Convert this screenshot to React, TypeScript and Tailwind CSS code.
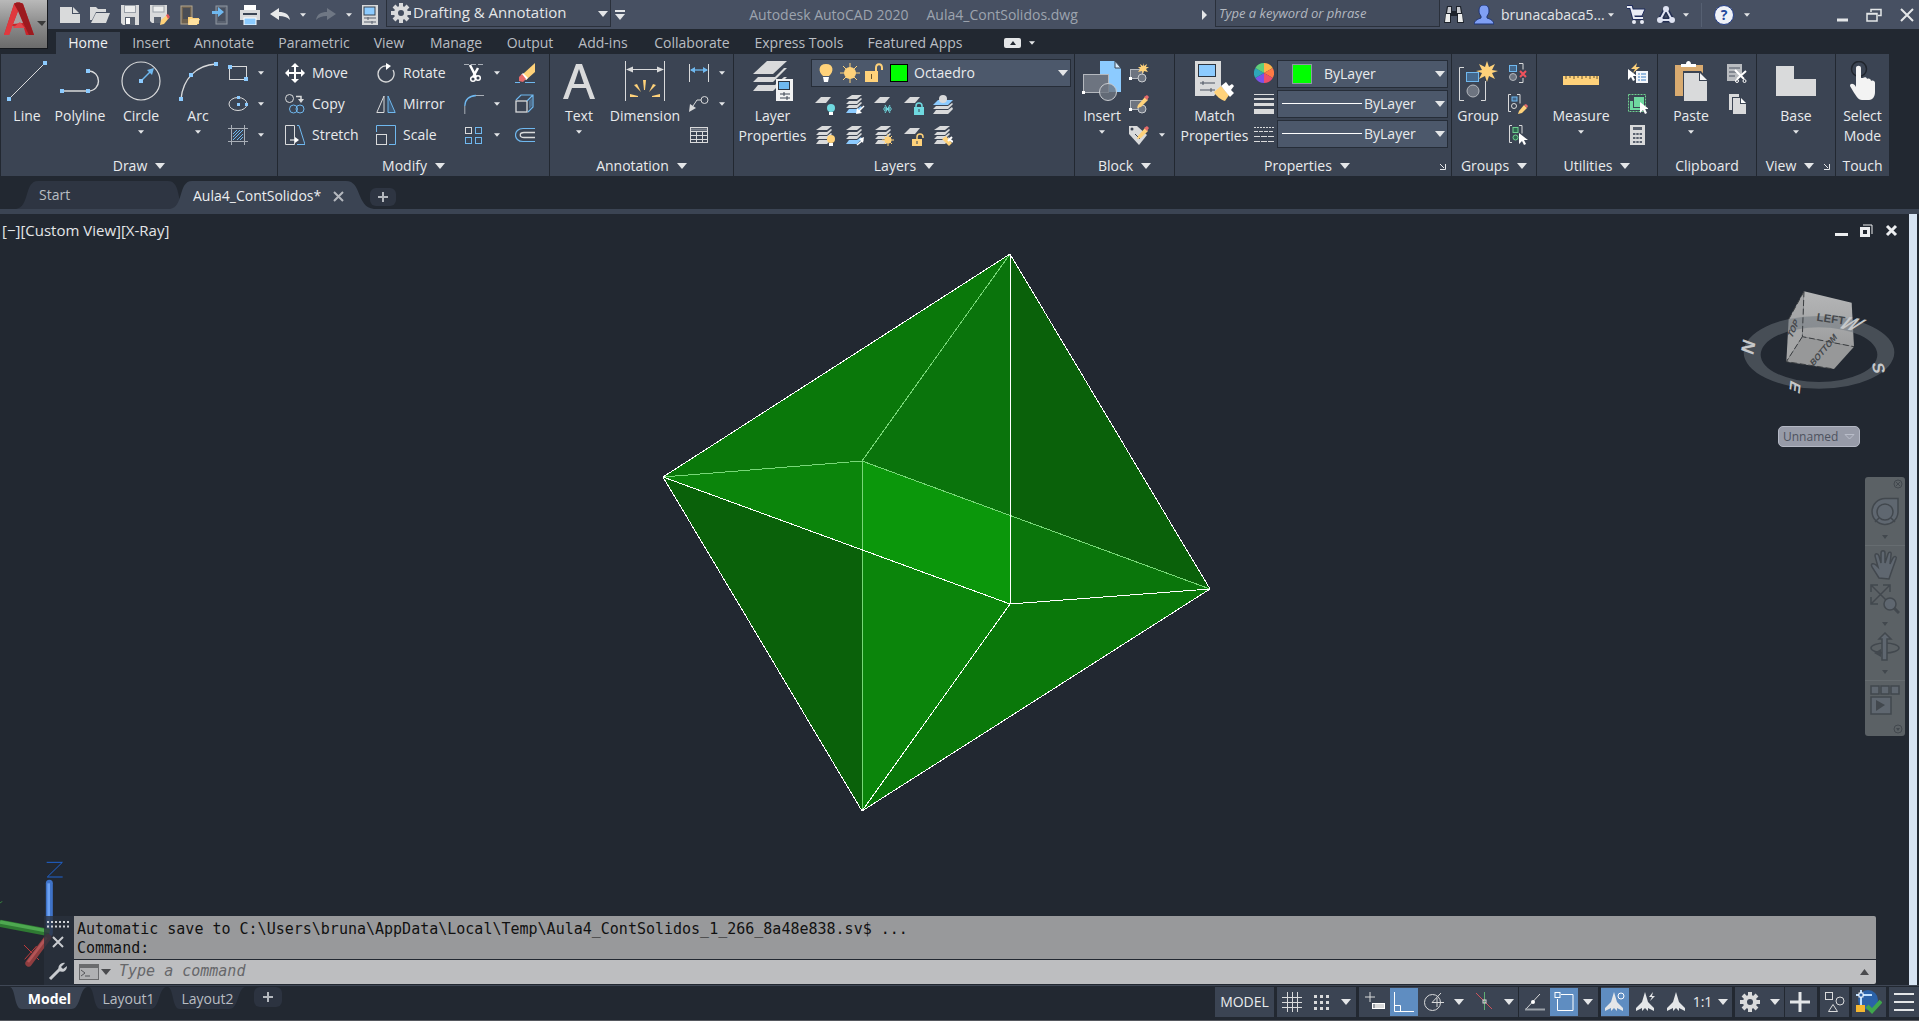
import React, { useState } from 'react';

const LIGHT = '#d9dadb';
const BLUE = '#6fb8ef';
const SKY = '#8ccbff';
const AMBER = '#ffd27a';
const CYAN = '#6fd9e0';

/* ---------- shared bits ---------- */

interface IconProps {
  w?: number;
  h?: number;
  box?: string;
  children: React.ReactNode;
}

function Icon({ w = 20, h = 20, box, children }: IconProps) {
  return (
    <svg width={w} height={h} viewBox={box ?? `0 0 ${w} ${h}`} fill="none" className="shrink-0" aria-hidden="true">
      {children}
    </svg>
  );
}

function Caret({ big = false }: { big?: boolean }) {
  return (
    <svg width={big ? 10 : 6} height={big ? 6 : 4} viewBox="0 0 10 6" className="shrink-0" aria-hidden="true">
      <path d="M0 0h10L5 6z" fill="#e4e6e8" />
    </svg>
  );
}

function Grip({ x, y }: { x: number; y: number }) {
  return <rect x={x - 2} y={y - 2} width="4" height="4" fill={SKY} />;
}

/* ---------- title bar icons ---------- */

const NewIcon = () => (
  <Icon>
    <path d="M0 2h12v7h8v9H0z" fill={LIGHT} />
    <path d="M13 2l6 6h-6z" fill={LIGHT} />
  </Icon>
);

const OpenIcon = () => (
  <Icon>
    <path d="M0 2h6l2 2h8v3H6L2 15H0z" fill={LIGHT} />
    <path d="M6 8h14l-4 10H1z" fill={LIGHT} />
  </Icon>
);

const SaveIcon = () => (
  <Icon>
    <path d="M1 0h18v20H3l-2-2z" fill={LIGHT} />
    <rect x="4" y="0" width="12" height="8" fill="#9aa0a8" />
    <rect x="5" y="1" width="10" height="6" fill="#eceded" />
    <rect x="5" y="12" width="10" height="8" fill="#59616f" />
    <rect x="6" y="13" width="4" height="6" fill="#fff" />
  </Icon>
);

const SaveAsIcon = () => (
  <Icon>
    <path d="M0 0h17v12l-7 6H2l-2-2z" fill={LIGHT} />
    <rect x="3" y="1" width="11" height="6" fill="#eceded" stroke="#9aa0a8" />
    <rect x="4" y="12" width="7" height="6" fill="#59616f" />
    <path d="M11 15l6-5 2 3-5 6-4 1z" fill={AMBER} />
    <path d="M16 10l2-1 2 3-2 2z" fill="#e0575b" />
  </Icon>
);

const OpenMobileIcon = () => (
  <Icon>
    <rect x="1" y="1" width="11" height="18" fill="#6d6150" stroke="#b5a78e" />
    <rect x="3" y="3" width="7" height="11" fill="#4a4d55" />
    <path d="M8 12h4l1 1h6v6H8z" fill={AMBER} />
    <path d="M10 14h10l-3 6H8z" fill="#ffe1a0" />
  </Icon>
);

const SaveMobileIcon = () => (
  <Icon>
    <rect x="6" y="1" width="11" height="18" fill="#5a6270" stroke="#9097a1" />
    <rect x="8" y="3" width="7" height="13" fill="#48505f" />
    <path d="M2 6h6V2l6 5-6 5V9H2z" fill={BLUE} />
  </Icon>
);

const PrintIcon = () => (
  <Icon>
    <rect x="4" y="0" width="12" height="6" fill="#fff" />
    <path d="M0 5h20v10H0z" fill={LIGHT} />
    <rect x="3" y="8" width="14" height="2" fill="#3b4453" />
    <rect x="4" y="13" width="12" height="7" fill={SKY} stroke="#fff" />
  </Icon>
);

const UndoIcon = ({ dim = false }: { dim?: boolean }) => (
  <Icon>
    <g transform={dim ? 'matrix(-1 0 0 1 20 0)' : undefined}>
      <path d="M0 9l9-6v4c6 0 10 2 11 8-3-3-6-4-11-4v4z" fill={dim ? '#6f7784' : '#e8e9ea'} />
    </g>
  </Icon>
);

const SheetIcon = () => (
  <Icon w={16}>
    <rect x="0" y="0" width="16" height="20" fill={LIGHT} />
    <rect x="2" y="2" width="11" height="8" fill={SKY} stroke="#3b4453" />
    <path d="M2 13h12M2 17h12" stroke="#59616f" />
    <path d="M6 12v3M10 16v3" stroke="#59616f" />
  </Icon>
);

const GearIcon = () => (
  <Icon>
    <circle cx="10" cy="10" r="5" stroke={LIGHT} strokeWidth="4" />
    <path d="M10 0v4M10 16v4M0 10h4M16 10h4M3 3l3 3M14 14l3 3M17 3l-3 3M6 14l-3 3" stroke={LIGHT} strokeWidth="4" />
  </Icon>
);

const BinocularsIcon = () => (
  <Icon>
    <path d="M3 1h5v5h4V1h5l3 17h-7v-7H7v7H0z" fill="#1d222b" />
    <path d="M4 2h3v6H3zM13 2h3l1 6h-4z" fill="#c9cbd0" />
    <path d="M2 9h4v8H1zM14 9h4l1 8h-5z" fill="#eceded" />
  </Icon>
);

const UserIcon = () => (
  <Icon>
    <path d="M10 0c4 0 5 3 5 6 0 2-1 4-2 5v2c3 1 6 2 7 6H0c1-4 4-5 7-6v-2c-1-1-2-3-2-5 0-3 1-6 5-6z" fill="#7f9ff5" stroke="#1f3576" />
  </Icon>
);

const CartIcon = () => (
  <Icon>
    <path d="M1 2h4l3 11h9" stroke="#1f2c5c" strokeWidth="4" />
    <path d="M5 4h14l-3 7H7z" fill="#e8ebf5" stroke="#1f2c5c" />
    <path d="M1 2h4l3 11h9" stroke="#e8ebf5" strokeWidth="2" />
    <circle cx="8" cy="17" r="2" fill="#e8ebf5" />
    <circle cx="16" cy="17" r="2" fill="#e8ebf5" />
  </Icon>
);

const ShareIcon = () => (
  <Icon>
    <path d="M10 4L4 15h12z" stroke="#232e52" strokeWidth="5" strokeLinejoin="round" />
    <path d="M10 4L4 15h12z" stroke="#dfe3f2" strokeWidth="2" />
    <circle cx="10" cy="4" r="3" fill="#dfe3f2" />
    <circle cx="4" cy="15" r="3" fill="#dfe3f2" />
    <circle cx="16" cy="15" r="3" fill="#dfe3f2" />
  </Icon>
);

const AppLogo = () => (
  <svg width="48" height="49" viewBox="0 0 48 49" aria-hidden="true">
    <path d="M4 35L14 4c1-2 7-2 9 0l11 31h-8l-2-7-12-2-3 9z" fill="#c9252b" />
    <path d="M14 4c1-2 7-2 9 0l11 31h-5z" fill="#9c1a1f" />
    <path d="M18 11l5 12-10 1z" fill="#a9a3a3" />
    <path d="M4 35l16-13 5 6-13 0-3 7z" fill="#e2474c" />
    <path d="M14 4l4 7-9 24H4z" fill="#e0393f" />
    <path d="M37 21h9l-4 5z" fill="#3a3a3a" />
  </svg>
);

/* ---------- ribbon icons ---------- */

const LineIcon = () => (
  <Icon w={40} h={40}>
    <path d="M2 38L38 2" stroke={LIGHT} />
    <Grip x={2} y={38} />
    <Grip x={38} y={2} />
  </Icon>
);

const PolylineIcon = () => (
  <Icon w={44} h={40}>
    <path d="M4 30h26c14 0 14-20 0-20" stroke={LIGHT} strokeWidth="1.4" />
    <Grip x={4} y={30} />
    <Grip x={30} y={30} />
    <Grip x={30} y={10} />
  </Icon>
);

const CircleIcon = () => (
  <Icon w={40} h={40}>
    <circle cx="20" cy="20" r="19" stroke={LIGHT} strokeWidth="1.2" />
    <path d="M20 20l10-10" stroke={BLUE} strokeWidth="1.4" />
    <path d="M33 7l-2 7-5-5z" fill={BLUE} />
    <Grip x={20} y={20} />
  </Icon>
);

const ArcIcon = () => (
  <Icon w={40} h={40}>
    <path d="M3 38C5 18 18 4 38 3" stroke={LIGHT} strokeWidth="1.4" />
    <Grip x={3} y={38} />
    <Grip x={13} y={14} />
    <Grip x={38} y={3} />
  </Icon>
);

const RectangleIcon = () => (
  <Icon>
    <rect x="1.5" y="3.5" width="17" height="13" stroke={LIGHT} />
    <Grip x={2} y={4} />
    <Grip x={18} y={16} />
  </Icon>
);

const EllipseIcon = () => (
  <Icon>
    <ellipse cx="10" cy="10" rx="9" ry="6.5" stroke={LIGHT} />
    <rect x="9" y="9" width="3" height="3" fill={SKY} />
    <rect x="9" y="2" width="3" height="3" fill={SKY} />
    <rect x="17" y="9" width="3" height="3" fill={SKY} />
  </Icon>
);

const HatchIcon = () => (
  <Icon>
    <path d="M3.5 0v20M16.5 0v20M0 3.5h20M0 16.5h20" stroke="#a9afb7" />
    <path d="M5 9l4-4M5 15L15 5M9 15l6-6M5 12l7-7M12 15l3-3" stroke={BLUE} />
  </Icon>
);

const MoveIcon = () => (
  <Icon>
    <path d="M10 0l4 4h-3v5h5V6l4 4-4 4v-3h-5v5h3l-4 4-4-4h3v-5H4v3l-4-4 4-4v3h5V4H6z" fill="#fff" />
  </Icon>
);

const CopyIcon = () => (
  <Icon>
    <circle cx="4.5" cy="4.5" r="4" stroke={LIGHT} />
    <path d="M11 2.5h5v3" stroke={LIGHT} strokeWidth="1.5" />
    <path d="M13 5h6l-3 4z" fill={LIGHT} />
    <circle cx="8.5" cy="15" r="4" stroke={BLUE} />
    <circle cx="15" cy="15" r="4" stroke={BLUE} />
  </Icon>
);

const StretchIcon = () => (
  <Icon>
    <path d="M.5.5h9v19h-9z" stroke={LIGHT} />
    <path d="M12 .5h2l6 19h-8" stroke={BLUE} />
    <path d="M5 15h7" stroke="#fff" />
    <path d="M10 12l4 3-4 3z" fill="#fff" />
  </Icon>
);

const RotateIcon = () => (
  <Icon>
    <path d="M11 3a8 8 0 1 0 6 4" stroke={LIGHT} strokeWidth="1.3" />
    <path d="M10 0l5 3-5 4z" fill="#fff" />
  </Icon>
);

const MirrorIcon = () => (
  <Icon>
    <path d="M8 2v16.5H.8z" stroke={LIGHT} />
    <path d="M12 2v16.5h7.2z" stroke={BLUE} fill="#3e5a76" />
  </Icon>
);

const ScaleIcon = () => (
  <Icon>
    <path d="M.5 7V.5h19v19H13" stroke={BLUE} />
    <rect x=".5" y="9.5" width="10" height="10" stroke={LIGHT} />
  </Icon>
);

const TrimIcon = () => (
  <Icon>
    <path d="M0 1.5h20" stroke="#a9afb7" strokeDasharray="5 2" />
    <path d="M6 2l6 12M14 5l-5 9" stroke="#fff" strokeWidth="2.5" />
    <circle cx="9" cy="16" r="2.3" stroke="#fff" strokeWidth="1.5" />
    <circle cx="14" cy="15" r="2.3" stroke="#fff" strokeWidth="1.5" />
  </Icon>
);

const FilletIcon = () => (
  <Icon>
    <path d="M12 1.5h8M.8 12v8" stroke="#a9afb7" />
    <path d="M12 1.5C5 2 1 6 .8 12" stroke={BLUE} strokeWidth="1.3" />
  </Icon>
);

const ArrayIcon = () => (
  <Icon>
    <rect x="1.5" y="2.5" width="6" height="6" stroke={LIGHT} />
    <rect x="11.5" y="2.5" width="6" height="6" stroke={BLUE} />
    <rect x="1.5" y="12.5" width="6" height="6" stroke={BLUE} />
    <rect x="11.5" y="12.5" width="6" height="6" stroke={BLUE} />
  </Icon>
);

const EraseIcon = () => (
  <Icon>
    <path d="M0 19.5h5M10 19.5h10" stroke={BLUE} />
    <path d="M8 11L20 0v9l-9 8z" fill={AMBER} />
    <path d="M6 12l2-2 5 5-2 2z" fill="#fff" />
    <path d="M4 14l3-3 4 5-3 3-4-1z" fill="#e66a6a" />
  </Icon>
);

const ExplodeIcon = () => (
  <Icon>
    <rect x="1" y="7" width="11" height="11" stroke={LIGHT} strokeWidth="1.3" />
    <path d="M1 6l5-5h12v12l-5 5M12 7l6-6" stroke={BLUE} strokeWidth="1.2" />
    <path d="M14 7l3-3v8l-3 3z" fill="#50708f" />
  </Icon>
);

const OffsetIcon = () => (
  <Icon>
    <path d="M20 3.5H8c-10 0-10 13 0 13h12" stroke={BLUE} strokeWidth="1.2" />
    <path d="M20 7.5H9c-5 0-5 5 0 5h11" stroke={LIGHT} strokeWidth="1.3" />
  </Icon>
);

const TextIcon = () => (
  <Icon w={36} h={40}>
    <path d="M2 38L15 3h6l13 35h-5l-4-11H11L7 38zM13 23h10L18 8z" fill={LIGHT} />
  </Icon>
);

const DimensionIcon = () => (
  <Icon w={40} h={40}>
    <path d="M.5 0v40M39.5 0v40M2 8.5h36" stroke={LIGHT} />
    <path d="M1 8.5l7-3v6zM39 8.5l-7-3v6z" fill={LIGHT} />
    <g fill={AMBER}>
      <path d="M18 19h3l-1 10h-1z" />
      <path d="M9 24l3-1 4 8zM31 24l-3-1-4 8z" />
      <path d="M5 33l8 2v1H5zM35 33l-8 2v1h8z" />
    </g>
  </Icon>
);

const LinearDimIcon = () => (
  <Icon>
    <path d="M.5 1v18M19.5 1v18" stroke={LIGHT} />
    <path d="M2 7h16" stroke={BLUE} strokeWidth="1.3" />
    <path d="M1 7l5-3v6zM19 7l-5-3v6z" fill={BLUE} />
  </Icon>
);

const LeaderIcon = () => (
  <Icon>
    <circle cx="15.5" cy="6" r="3.5" stroke={LIGHT} />
    <path d="M12 6H8l-6 9" stroke={LIGHT} />
    <path d="M0 18l1-8 6 4z" fill={LIGHT} />
  </Icon>
);

const TableIcon = () => (
  <Icon>
    <rect x="1.5" y="2.5" width="17" height="15" stroke={LIGHT} />
    <path d="M1 6.5h18M1 10.5h18M1 14.5h18M7.5 6v12M13.5 6v12" stroke={LIGHT} />
    <path d="M2 4.5h16" stroke="#7c838e" strokeWidth="2" />
  </Icon>
);

const LayerPropsIcon = () => (
  <Icon w={40} h={40}>
    <path d="M14 0h20L20 13H0z" fill={LIGHT} />
    <path d="M0 21l5-5h17L31 7h3L20 21z" fill={LIGHT} />
    <path d="M0 30l5-6h17l9-8h3L20 30z" fill={LIGHT} />
    <rect x="23" y="18" width="17" height="22" fill="#f1f2f3" />
    <rect x="25.5" y="20.5" width="11" height="8" fill={BLUE} stroke="#2c3440" />
    <path d="M27 33h10M27 37h10M31 31v4M34 35v4" stroke="#3b4453" />
  </Icon>
);

const Sheet = () => <path d="M6 2h10l-5 6H0z" fill={LIGHT} />;

const Stack = ({ low = LIGHT }: { low?: string }) => (
  <>
    <path d="M7 0h10l-5 4H1z" fill={LIGHT} />
    <path d="M1 9l3-3h8l4-3 1 1-5 5z" fill={LIGHT} />
    <path d="M1 13l3-3h8l4-3 1 1-5 5z" fill={LIGHT} />
    <path d="M1 18l3-4h8l4-3 1 2-5 5z" fill={low} />
  </>
);

const layerTools: { label: string; icon: React.ReactNode }[] = [
  { label: 'Off', icon: <Icon><Sheet /><circle cx="16" cy="13" r="4" fill={CYAN} /><path d="M14 17h4v3h-4z" fill="#fff" /></Icon> },
  { label: 'Isolate', icon: <Icon><Stack low={SKY} /><path d="M19 11l-5 5" stroke="#fff" strokeWidth="1.5" /><path d="M11 19l1-6 5 5z" fill="#fff" /></Icon> },
  { label: 'Freeze', icon: <Icon><Sheet /><path d="M9 14h9M11 10l5 8M16 10l-5 8M10 12l7 4M17 12l-7 4" stroke={CYAN} /></Icon> },
  { label: 'Lock', icon: <Icon><Sheet /><path d="M12 13v-2c0-4 6-4 6 0v2" stroke={CYAN} strokeWidth="1.5" /><rect x="10" y="12" width="10" height="8" fill={CYAN} /><path d="M15 14v3" stroke="#3b4453" /></Icon> },
  { label: 'Make Current', icon: <Icon><path d="M5 5h15l-5 5H0z" fill={SKY} /><path d="M0 14l3-3h12l4-3 1 1-5 5z" fill={LIGHT} /><path d="M0 19l3-4h12l4-3 1 2-5 5z" fill={LIGHT} /><circle cx="10" cy="4" r="4" fill={LIGHT} /></Icon> },
  { label: 'Turn All On', icon: <Icon><Stack /><circle cx="16" cy="13" r="4" fill={AMBER} /><path d="M14 17h4v3h-4z" fill="#fff" /></Icon> },
  { label: 'Unisolate', icon: <Icon><Stack low={SKY} /><path d="M12 19l6-5" stroke="#fff" strokeWidth="1.5" /><path d="M19 11l-1 6-4-4z" fill="#fff" /></Icon> },
  { label: 'Thaw All', icon: <Icon><Stack /><circle cx="14" cy="14" r="3.5" fill={AMBER} /><path d="M14 8v12M8 14h12M10 10l8 8M18 10l-8 8" stroke={AMBER} /></Icon> },
  { label: 'Unlock', icon: <Icon><Sheet /><path d="M13 14v-3c0-4 6-4 6 0v1" stroke={AMBER} strokeWidth="1.5" /><rect x="8" y="13" width="10" height="7" fill={AMBER} /><path d="M13 15v3" stroke="#3b4453" /></Icon> },
  { label: 'Match Layer', icon: <Icon><Stack /><path d="M9 13l4-3 6 7-3 3z" fill={AMBER} /><path d="M19 11l-4 4M16 13l4 3" stroke="#fff" strokeWidth="2" /></Icon> },
];

const InsertIcon = () => (
  <Icon w={40} h={40}>
    <path d="M18 0h15l6 7v24H18z" fill={SKY} />
    <path d="M33 0v7h6z" fill="#d6ecff" stroke="#3b4453" />
    <rect x="1.5" y="13.5" width="25" height="18" fill="#6d7480" stroke="#b4b8be" />
    <circle cx="26" cy="31" r="8.5" fill="#6d7480" fillOpacity="0.8" stroke="#c9ccd0" />
    <rect x="0" y="30" width="3" height="3" fill="#fff" />
  </Icon>
);

const BlockBase = () => (
  <>
    <rect x="1.5" y="6.5" width="12" height="9" fill="#6d7480" stroke="#b4b8be" />
    <circle cx="13" cy="15" r="4" fill="#6d7480" stroke="#c9ccd0" />
    <rect x="0" y="14" width="3" height="3" fill="#fff" />
  </>
);

const Pencil = () => (
  <>
    <path d="M9 11l7-8 3 3-7 7-4 1z" fill={AMBER} />
    <path d="M15 3l3-2 2 2-2 3z" fill="#e66a6a" />
  </>
);

const CreateBlockIcon = () => (
  <Icon>
    <BlockBase />
    <path d="M14 0l1 3 3-2-1 3h3l-3 2 2 3-4-1-1 3-1-3-4 1 2-3-2-2h3l-1-3 3 2z" fill={AMBER} />
  </Icon>
);

const EditBlockIcon = () => (
  <Icon>
    <BlockBase />
    <Pencil />
  </Icon>
);

const EditAttrIcon = () => (
  <Icon>
    <path d="M0 1l8 0 10 9-8 10L0 9z" fill={LIGHT} />
    <circle cx="3" cy="4" r="1.5" fill="#3b4453" />
    <path d="M6 9l5 5" stroke="#3b4453" />
    <Pencil />
  </Icon>
);

const MatchPropsIcon = () => (
  <Icon w={40} h={40}>
    <path d="M0 0h26v26l-7 9H0z" fill={LIGHT} />
    <rect x="3.5" y="3.5" width="17" height="12" fill={SKY} stroke="#2c3440" />
    <path d="M5 22h15M5 29h15M8 20v4M16 27v4" stroke="#4a5260" />
    <path d="M19 31l7-6 8 9-4 6c-4-1-9-5-11-9z" fill={AMBER} />
    <path d="M26 25l5-4 3 4 3-2 2 2-3 4 3 3-4 4z" fill="#fff" />
  </Icon>
);

const ColorWheelIcon = () => (
  <Icon>
    <path d="M10 10V0a10 10 0 0 1 8.7 5z" fill="#ffb347" />
    <path d="M10 10l8.7-5a10 10 0 0 1 0 10z" fill="#ff7a45" />
    <path d="M10 10l8.7 5A10 10 0 0 1 10 20z" fill="#ee4d6b" />
    <path d="M10 10v10a10 10 0 0 1-8.7-5z" fill="#7b52e8" />
    <path d="M10 10L1.3 15a10 10 0 0 1 0-10z" fill="#2ea6b8" />
    <path d="M10 10L1.3 5A10 10 0 0 1 10 0z" fill="#5fcf7a" />
  </Icon>
);

const LineweightIcon = () => (
  <Icon>
    <path d="M0 .5h20" stroke={LIGHT} />
    <path d="M0 5h20" stroke={LIGHT} strokeWidth="2" />
    <path d="M0 10.5h20" stroke={LIGHT} strokeWidth="3" />
    <path d="M0 17.5h20" stroke={LIGHT} strokeWidth="5" />
  </Icon>
);

const LinetypeIcon = () => (
  <Icon>
    <path d="M0 2.5h20" stroke={LIGHT} strokeDasharray="2 1" />
    <path d="M0 6.5h20" stroke={LIGHT} strokeDasharray="4 1" />
    <path d="M0 11.5h20M0 16.5h20" stroke={LIGHT} strokeDasharray="6 1" />
  </Icon>
);

const GroupIcon = () => (
  <Icon w={40} h={40}>
    <path d="M6 6.5H1.5v33H6M23 39.5h4.5V20" stroke={LIGHT} />
    <rect x="8.5" y="11.5" width="12" height="9" fill="#44688c" stroke={BLUE} />
    <circle cx="15" cy="30" r="6" fill="#6d7480" stroke="#b4b8be" />
    <path d="M29 0l2 6 6-3-3 6 6 1-6 2 3 6-6-3-2 6-2-6-6 3 3-6-6-2 6-1-3-6 6 3z" fill={AMBER} />
  </Icon>
);

const UngroupIcon = () => (
  <Icon>
    <rect x="1.5" y="2.5" width="7" height="6" fill="#44688c" stroke={BLUE} />
    <circle cx="5" cy="14" r="3.5" fill="#6d7480" stroke="#b4b8be" />
    <path d="M11 .5h4v6M15 15v4.5h-4" stroke={LIGHT} />
    <path d="M12 8l6 6M18 8l-6 6" stroke="#f0525c" strokeWidth="2" />
  </Icon>
);

const GroupEditIcon = () => (
  <Icon>
    <path d="M3 .5H.5v17H3M9 .5h3v9" stroke={LIGHT} />
    <rect x="4" y="3" width="5" height="4" fill="#44688c" stroke={BLUE} />
    <circle cx="6" cy="12" r="2.5" stroke={LIGHT} />
    <path d="M11 17l5-6 3 3-5 5-4 1z" fill={AMBER} />
    <path d="M16 11l2-1 2 2-1 2z" fill="#e66a6a" />
  </Icon>
);

const Cursor = () => <path d="M0 0v11l3-3 2 4 2-1-2-4h4z" fill="#fff" />;

const GroupSelectIcon = () => (
  <Icon>
    <path d="M4 .5H1.5v17H4M11 .5h3v8" stroke={LIGHT} />
    <rect x="5" y="2.5" width="5" height="5" fill="#2f6a50" stroke="#6fd08f" />
    <circle cx="7.5" cy="12.5" r="2.5" stroke="#6fd08f" fill="#2f6a50" />
    <g transform="translate(11 8)"><Cursor /></g>
  </Icon>
);

const MeasureIcon = () => (
  <Icon w={40} h={40}>
    <rect x="2" y="15" width="36" height="9" fill={AMBER} />
    <path d="M5 15v3M9 15v2M13 15v3M17 15v2M21 15v3M25 15v2M29 15v3M33 15v2M36 15v3" stroke="#6a5730" />
  </Icon>
);

const QuickSelectIcon = () => (
  <Icon>
    <path d="M9 0L3 6h4l-2 4 7-6H8z" fill={AMBER} />
    <g transform="translate(0 6)"><Cursor /></g>
    <rect x="8" y="8" width="12" height="12" fill="#f5f7fa" />
    <path d="M10 11h2M13 11h5M10 14h2M13 14h5M10 17h2M13 17h5" stroke="#3a7fc4" />
  </Icon>
);

const SelectAllIcon = () => (
  <Icon>
    <rect x=".5" y=".5" width="17" height="17" stroke="#6fd08f" strokeDasharray="2 1" />
    <rect x="6" y="3" width="10" height="10" fill="#6fd9a0" />
    <path d="M2 7h3v7h7v2H2z" fill="#6fd9a0" />
    <g transform="translate(12 8)"><Cursor /></g>
  </Icon>
);

const CalcIcon = () => (
  <Icon>
    <rect x="2" y="0" width="15" height="20" fill={LIGHT} />
    <rect x="5" y="2" width="9" height="3" fill="#59616f" />
    <path d="M5 9h9M5 13h9M5 17h9" stroke="#59616f" strokeWidth="2" strokeDasharray="2.4 .9" />
  </Icon>
);

const PasteIcon = () => (
  <Icon w={34} h={40}>
    <path d="M1 4h28v31H1z" fill="#d9ab70" />
    <path d="M7 6V3h5c0-4 5-4 5 0h5v3z" fill="#fff" />
    <path d="M9 10h18l7 9v21H9z" fill="#3b4453" />
    <path d="M10 12h15v8h8v20H10z" fill={LIGHT} />
    <path d="M26 12l7 7h-7z" fill="#f5f5f5" />
  </Icon>
);

const CutIcon = () => (
  <Icon>
    <path d="M0 1h15v10l-5 7H0z" fill="#b9bcc0" />
    <path d="M2 5h11M2 9h8M2 13h6" stroke="#4a5260" />
    <path d="M8 7l9 9M19 8l-9 8" stroke="#fff" strokeWidth="2" />
    <circle cx="10" cy="18" r="1.5" stroke="#fff" />
    <circle cx="17.5" cy="18" r="1.5" stroke="#fff" />
  </Icon>
);

const CopyClipIcon = () => (
  <Icon>
    <path d="M2 0h10v3H5v13H2z" fill={LIGHT} />
    <path d="M6 4h7v6h6v10H6z" fill={LIGHT} />
    <path d="M14 4l5 5h-5z" fill="#fff" />
  </Icon>
);

const BaseIcon = () => (
  <Icon w={40} h={40}>
    <path d="M0 5h18v13h22v17H0z" fill={LIGHT} />
  </Icon>
);

const TouchIcon = () => (
  <Icon w={28} h={40}>
    <circle cx="10" cy="8" r="7.5" stroke="#20252d" strokeWidth="1.5" />
    <path d="M7 26V7c0-3 5-3 5 0v10h2c1-1 4-1 4 1 2-1 4 0 4 2 2-1 4 0 4 2v9c0 4-2 8-6 8h-7c-4 0-6-4-12-14 0-3 4-3 6 1z" fill="#f3f3f3" />
  </Icon>
);

/* ---------- ribbon pieces ---------- */

interface BigButtonProps {
  icon: React.ReactNode;
  lines: string[];
  width: string;
  caret?: boolean;
}

function BigButton({ icon, lines, width, caret = false }: BigButtonProps) {
  return (
    <button className={`flex shrink-0 flex-col items-center pt-[7px] ${width}`}>
      {icon}
      <span className="mt-[5px] block text-center leading-5 whitespace-nowrap">
        {lines.map((line) => (
          <span key={line} className="block">{line}</span>
        ))}
      </span>
      {caret && <span className="mt-1"><Caret /></span>}
    </button>
  );
}

interface ToolRow {
  icon: React.ReactNode;
  name: string;
  text?: boolean;
  caret?: boolean;
}

function ToolColumn({ rows, width }: { rows: ToolRow[]; width: string }) {
  return (
    <div className={`flex shrink-0 flex-col pt-[3px] ${width}`}>
      {rows.map((row) => (
        <button key={row.name} aria-label={row.name} className="flex h-[31px] items-center gap-[7px]">
          {row.icon}
          {row.text && <span>{row.name}</span>}
          {row.caret && <span className="pl-[3px]"><Caret /></span>}
        </button>
      ))}
    </div>
  );
}

interface PanelProps {
  title: string;
  width: string;
  menu?: boolean;
  launcher?: boolean;
  children: React.ReactNode;
}

function Panel({ title, width, menu = true, launcher = false, children }: PanelProps) {
  return (
    <section className={`flex shrink-0 flex-col border-r border-[#222831] bg-[#3b4453] ${width}`}>
      <div className="flex flex-1">{children}</div>
      <div className="flex h-5 items-center">
        <button className="flex flex-1 items-center justify-center gap-2">
          {title}
          {menu && <Caret big />}
        </button>
        {launcher && (
          <button aria-label={`${title} settings`} className="w-3">
            <Icon w={7} h={7}>
              <path d="M1 1l4 4" stroke="#e4e6e8" />
              <path d="M6.5 1v5.5H1" stroke="#e4e6e8" />
            </Icon>
          </button>
        )}
      </div>
    </section>
  );
}

interface PropertySelectProps {
  label: string;
  swatch?: boolean;
}

function PropertySelect({ label, swatch = false }: PropertySelectProps) {
  return (
    <div className="relative mb-0.5 h-7 w-[171px] border border-[#262d38] bg-[#4c586b]">
      <select aria-label={label} className={`h-full w-full appearance-none bg-transparent outline-none ${swatch ? 'pl-[46px]' : 'pl-[86px]'}`}>
        <option>ByLayer</option>
      </select>
      {swatch ? (
        <span className="pointer-events-none absolute top-[3px] left-[14px] h-5 w-5 border border-[#8f98a5] bg-[#00ff00]" />
      ) : (
        <span className="pointer-events-none absolute top-[12px] left-1 h-px w-20 bg-white" />
      )}
      <span className="pointer-events-none absolute top-[10px] right-0.5 flex"><Caret big /></span>
    </div>
  );
}

const ribbonTabs: { name: string; width: string }[] = [
  { name: 'Home', width: 'w-16' },
  { name: 'Insert', width: 'w-[62px]' },
  { name: 'Annotate', width: 'w-[84px]' },
  { name: 'Parametric', width: 'w-[96px]' },
  { name: 'View', width: 'w-[54px]' },
  { name: 'Manage', width: 'w-[80px]' },
  { name: 'Output', width: 'w-[68px]' },
  { name: 'Add-ins', width: 'w-[78px]' },
  { name: 'Collaborate', width: 'w-[100px]' },
  { name: 'Express Tools', width: 'w-[114px]' },
  { name: 'Featured Apps', width: 'w-[118px]' },
];

function Header() {
  const [tab, setTab] = useState('Home');

  return (
    <header className="flex h-[54px] items-start bg-[#222831]">
      <button aria-label="Application menu" className="h-[49px] w-12 shrink-0 border-r border-b border-[#15181d] bg-linear-to-b from-[#b9b9b9] via-[#8c8c8c] to-[#6b6b6b]">
        <AppLogo />
      </button>
      <div className="min-w-0 flex-1">
        {/* Title bar */}
        <div className="flex h-[29px] items-center bg-[#475062] text-[#e4e6e8]">
          <div className="flex w-[338px] shrink-0 items-center gap-[10px] pl-3">
            <button aria-label="New"><NewIcon /></button>
            <button aria-label="Open"><OpenIcon /></button>
            <button aria-label="Save"><SaveIcon /></button>
            <button aria-label="Save As"><SaveAsIcon /></button>
            <button aria-label="Open from Web and Mobile"><OpenMobileIcon /></button>
            <button aria-label="Save to Web and Mobile"><SaveMobileIcon /></button>
            <button aria-label="Plot"><PrintIcon /></button>
            <button aria-label="Undo"><UndoIcon /></button>
            <Caret />
            <button aria-label="Redo"><UndoIcon dim /></button>
            <Caret />
            <button aria-label="Sheet Set Manager"><SheetIcon /></button>
          </div>
          <div className="relative h-[27px] w-[225px] shrink-0 self-start border border-t-0 border-[#2a303b] bg-[#434c5d]">
            <select aria-label="Workspace" className="h-full w-full appearance-none bg-transparent pl-[26px] text-[15px] outline-none">
              <option>Drafting &amp; Annotation</option>
            </select>
            <span className="pointer-events-none absolute top-[3px] left-1"><GearIcon /></span>
            <span className="pointer-events-none absolute top-[11px] right-0.5 flex"><Caret big /></span>
          </div>
          <button aria-label="Customize" className="ml-1 flex w-[10px] shrink-0 flex-col gap-0.5">
            <span className="h-0.5 w-full bg-[#e4e6e8]" />
            <Caret big />
          </button>
          <h1 className="flex flex-1 justify-center gap-[18px] text-[#9da4af] whitespace-nowrap">
            <span>Autodesk AutoCAD 2020</span>
            <span>Aula4_ContSolidos.dwg</span>
          </h1>
          <button aria-label="Collapse search" className="w-[13px] shrink-0">
            <Icon w={5} h={10}><path d="M0 0l5 5-5 5z" fill="#e4e6e8" /></Icon>
          </button>
          <input
            aria-label="Search"
            placeholder="Type a keyword or phrase"
            className="h-[27px] w-[225px] shrink-0 self-start border border-t-0 border-[#2a303b] bg-[#434c5d] pl-[3px] text-[13px] italic outline-none placeholder:text-[#b3b8c0]"
          />
          <div className="flex w-[479px] shrink-0 items-center pl-1">
            <button aria-label="Find"><BinocularsIcon /></button>
            <button className="ml-[10px] flex w-[140px] items-center">
              <UserIcon />
              <span className="flex-1 pl-[7px] text-left">brunacabaca5...</span>
              <Caret />
            </button>
            <button aria-label="App Store" className="ml-3"><CartIcon /></button>
            <button aria-label="Stay connected" className="ml-[10px] flex items-center gap-[7px]"><ShareIcon /><Caret /></button>
            <span className="ml-3 h-6 w-px bg-[#566072]" />
            <button aria-label="Help" className="ml-3 flex items-center gap-[10px]">
              <span className="h-5 w-5 rounded-full border border-[#26418c] bg-[#eef1f7] text-sm leading-[18px] font-bold text-[#24489c]">?</span>
              <Caret />
            </button>
            <div className="ml-auto flex items-center gap-[18px] pr-[5px]">
              <button aria-label="Minimize"><Icon w={11} h={14}><path d="M0 12h11" stroke="#e4e6e8" strokeWidth="3" /></Icon></button>
              <button aria-label="Restore"><Icon w={16} h={14}><path d="M5 4V1.5h10v6h-3" stroke="#e4e6e8" strokeWidth="1.5" /><path d="M1 5.5h10V13H1zM1 6h10" stroke="#e4e6e8" strokeWidth="1.5" /></Icon></button>
              <button aria-label="Close"><Icon w={14} h={14}><path d="M1 1l12 12M13 1L1 13" stroke="#e4e6e8" strokeWidth="2" /></Icon></button>
            </div>
          </div>
        </div>

        {/* Ribbon tabs */}
        <nav className="flex h-[25px] items-end pl-2">
          {ribbonTabs.map(({ name, width }) => (
            <button
              key={name}
              onClick={() => setTab(name)}
              className={`h-[22px] shrink-0 leading-[22px] whitespace-nowrap ${width} ${
                tab === name ? 'bg-[#3b4453] text-[#f0f1f2]' : 'text-[#b9bdc3]'
              }`}
            >
              {name}
            </button>
          ))}
          <button aria-label="Minimize ribbon" className="ml-[30px] flex h-[22px] items-center gap-2">
            <span className="flex h-[10px] w-[17px] items-center justify-center rounded-xs bg-[#e4e6e8]">
              <Icon w={6} h={4}><path d="M0 4h6L3 0z" fill="#222831" /></Icon>
            </span>
            <Caret />
          </button>
        </nav>
      </div>
    </header>
  );
}

function Ribbon() {
  return (
    <div className="flex h-[122px] overflow-hidden pl-px text-[#e9ebed]">
      <Panel title="Draw" width="w-[277px]">
        <BigButton icon={<LineIcon />} lines={['Line']} width="w-[52px]" />
        <BigButton icon={<PolylineIcon />} lines={['Polyline']} width="w-[54px]" />
        <BigButton icon={<CircleIcon />} lines={['Circle']} width="w-[68px]" caret />
        <BigButton icon={<ArcIcon />} lines={['Arc']} width="w-[46px]" caret />
        <div className="flex pl-[7px]">
          <ToolColumn
            width="w-12"
            rows={[
              { name: 'Rectangle', icon: <RectangleIcon />, caret: true },
              { name: 'Ellipse', icon: <EllipseIcon />, caret: true },
              { name: 'Hatch', icon: <HatchIcon />, caret: true },
            ]}
          />
        </div>
      </Panel>

      <Panel title="Modify" width="w-[272px]">
        <div className="flex pl-[7px]">
          <ToolColumn
            width="w-[91px]"
            rows={[
              { name: 'Move', icon: <MoveIcon />, text: true },
              { name: 'Copy', icon: <CopyIcon />, text: true },
              { name: 'Stretch', icon: <StretchIcon />, text: true },
            ]}
          />
          <ToolColumn
            width="w-[88px]"
            rows={[
              { name: 'Rotate', icon: <RotateIcon />, text: true },
              { name: 'Mirror', icon: <MirrorIcon />, text: true },
              { name: 'Scale', icon: <ScaleIcon />, text: true },
            ]}
          />
          <ToolColumn
            width="w-[51px]"
            rows={[
              { name: 'Trim', icon: <TrimIcon />, caret: true },
              { name: 'Fillet', icon: <FilletIcon />, caret: true },
              { name: 'Array', icon: <ArrayIcon />, caret: true },
            ]}
          />
          <ToolColumn
            width="w-5"
            rows={[
              { name: 'Erase', icon: <EraseIcon /> },
              { name: 'Explode', icon: <ExplodeIcon /> },
              { name: 'Offset', icon: <OffsetIcon /> },
            ]}
          />
        </div>
      </Panel>

      <Panel title="Annotation" width="w-[184px]">
        <BigButton icon={<TextIcon />} lines={['Text']} width="w-[58px]" caret />
        <BigButton icon={<DimensionIcon />} lines={['Dimension']} width="w-[74px]" />
        <div className="flex pl-[7px]">
          <ToolColumn
            width="w-10"
            rows={[
              { name: 'Linear', icon: <LinearDimIcon />, caret: true },
              { name: 'Leader', icon: <LeaderIcon />, caret: true },
              { name: 'Table', icon: <TableIcon /> },
            ]}
          />
        </div>
      </Panel>

      <Panel title="Layers" width="w-[341px]">
        <BigButton icon={<LayerPropsIcon />} lines={['Layer', 'Properties']} width="w-[77px]" />
        <div className="pt-[5px]">
          <div className="relative h-7 w-[260px] border border-[#262d38] bg-[#4c586b]">
            <select aria-label="Layer" className="h-full w-full appearance-none bg-transparent pl-[102px] outline-none">
              <option>Octaedro</option>
            </select>
            <div className="pointer-events-none absolute inset-y-0 left-1 flex items-center gap-1">
              <Icon><path d="M10 1c8 0 8 8 3 12H7C2 9 2 1 10 1z" fill={AMBER} /><path d="M7 14h6l-1 5H8z" fill="#fff" /></Icon>
              <Icon><circle cx="10" cy="10" r="6" fill={AMBER} /><path d="M10 0v20M0 10h20M3 3l14 14M17 3L3 17" stroke={AMBER} /></Icon>
              <Icon><path d="M12 9V5c0-5 6-5 6 0v2" stroke={AMBER} strokeWidth="2" /><path d="M1 8h13v11H1z" fill={AMBER} /><path d="M7.5 11v5" stroke="#6a5730" /></Icon>
              <span className="ml-0.5 h-[18px] w-[18px] border border-black bg-[#00ff00]" />
            </div>
            <span className="pointer-events-none absolute top-[10px] right-0.5 flex"><Caret big /></span>
          </div>
          <div className="grid w-[152px] grid-cols-5 pt-0.5 pl-1">
            {layerTools.map((tool) => (
              <button key={tool.label} aria-label={tool.label} className="flex h-[31px] items-center">
                {tool.icon}
              </button>
            ))}
          </div>
        </div>
      </Panel>

      <Panel title="Block" width="w-[100px]">
        <BigButton icon={<InsertIcon />} lines={['Insert']} width="w-[54px]" caret />
        <ToolColumn
          width="w-10"
          rows={[
            { name: 'Create Block', icon: <CreateBlockIcon /> },
            { name: 'Edit Block', icon: <EditBlockIcon /> },
            { name: 'Edit Attributes', icon: <EditAttrIcon />, caret: true },
          ]}
        />
      </Panel>

      <Panel title="Properties" width="w-[277px]" launcher>
        <BigButton icon={<MatchPropsIcon />} lines={['Match', 'Properties']} width="w-[79px]" />
        <ToolColumn
          width="w-[23px]"
          rows={[
            { name: 'Color', icon: <ColorWheelIcon /> },
            { name: 'Lineweight', icon: <LineweightIcon /> },
            { name: 'Linetype', icon: <LinetypeIcon /> },
          ]}
        />
        <div className="pt-1.5">
          <PropertySelect label="Object color" swatch />
          <PropertySelect label="Lineweight" />
          <PropertySelect label="Linetype" />
        </div>
      </Panel>

      <Panel title="Groups" width="w-[85px]">
        <BigButton icon={<GroupIcon />} lines={['Group']} width="w-[52px]" />
        <div className="flex pl-1">
          <ToolColumn
            width="w-5"
            rows={[
              { name: 'Ungroup', icon: <UngroupIcon /> },
              { name: 'Group Edit', icon: <GroupEditIcon /> },
              { name: 'Group Selection', icon: <GroupSelectIcon /> },
            ]}
          />
        </div>
      </Panel>

      <Panel title="Utilities" width="w-[121px]">
        <BigButton icon={<MeasureIcon />} lines={['Measure']} width="w-[88px]" caret />
        <div className="flex pl-[3px]">
          <ToolColumn
            width="w-5"
            rows={[
              { name: 'Quick Select', icon: <QuickSelectIcon /> },
              { name: 'Select All', icon: <SelectAllIcon /> },
              { name: 'Quick Calculator', icon: <CalcIcon /> },
            ]}
          />
        </div>
      </Panel>

      <Panel title="Clipboard" width="w-[99px]" menu={false}>
        <BigButton icon={<PasteIcon />} lines={['Paste']} width="w-[66px]" caret />
        <div className="flex pl-[3px]">
          <ToolColumn
            width="w-5"
            rows={[
              { name: 'Cut', icon: <CutIcon /> },
              { name: 'Copy Clip', icon: <CopyClipIcon /> },
            ]}
          />
        </div>
      </Panel>

      <Panel title="View" width="w-[79px]" launcher>
        <BigButton icon={<BaseIcon />} lines={['Base']} width="w-[78px]" caret />
      </Panel>

      <Panel title="Touch" width="w-[54px]" menu={false}>
        <BigButton icon={<TouchIcon />} lines={['Select', 'Mode']} width="w-[53px]" />
      </Panel>
    </div>
  );
}

/* ---------- document tabs ---------- */

function FileTabs() {
  return (
    <div className="flex h-[38px] items-end border-b-[5px] border-[#3b4453] pl-4">
      <button className="relative h-7 w-[170px] text-left text-[#b9bdc3]">
        <svg className="absolute inset-0 h-full w-full" viewBox="0 0 170 28" preserveAspectRatio="none" aria-hidden="true">
          <path d="M0 28c14-2 8-28 22-28h130c14 0 8 26 18 28z" fill="#2e3542" />
        </svg>
        <span className="relative pl-[23px]">Start</span>
      </button>
      <div className="relative -ml-4 flex h-7 w-[204px] items-center pt-0.5 text-[#eceef0]">
        <svg className="absolute inset-0 h-full w-full" viewBox="0 0 204 28" preserveAspectRatio="none" aria-hidden="true">
          <path d="M0 28c14-2 8-28 22-28h154c16 0 10 26 28 28z" fill="#3b4453" />
        </svg>
        <button className="relative ml-[23px] w-[140px] text-left">Aula4_ContSolidos*</button>
        <button aria-label="Close drawing" className="relative">
          <Icon w={11} h={11}><path d="M1 1l9 9M10 1l-9 9" stroke="#b4b8be" strokeWidth="2" /></Icon>
        </button>
      </div>
      <button aria-label="New drawing" className="mb-[3px] -ml-1 flex h-[18px] w-[26px] items-center justify-center rounded-md bg-[#2e3542]">
        <Icon w={10} h={10}><path d="M5 0v10M0 5h10" stroke="#b4b8be" strokeWidth="2" /></Icon>
      </button>
    </div>
  );
}

/* ---------- drawing area ---------- */

const faces: { points: string; fill: string }[] = [
  { points: '348,0 1,223 200,207', fill: '#0a780a' },
  { points: '348,0 200,207 348,261', fill: '#0a740c' },
  { points: '348,0 548,335 348,261', fill: '#0a610a' },
  { points: '1,223 200,207 200,296', fill: '#0b850b' },
  { points: '200,207 348,261 348,350 200,296', fill: '#0b970b' },
  { points: '348,261 548,335 348,350', fill: '#0a760b' },
  { points: '1,223 200,296 200,557', fill: '#0a610a' },
  { points: '200,296 348,350 200,557', fill: '#0b850b' },
  { points: '348,350 548,335 200,557', fill: '#0a780a' },
];

function Octahedron() {
  return (
    <svg className="absolute top-10 left-[662px]" width="550" height="559" viewBox="0 0 550 559" shapeRendering="crispEdges" role="img" aria-label="Octahedron solid">
      {faces.map((face) => (
        <polygon key={face.points} points={face.points} fill={face.fill} />
      ))}
      <path d="M348 0L200 207M1 223L200 207M200 207L548 335M200 207V557" stroke="#78d878" fill="none" />
      <path d="M348 0L1 223L200 557L548 335ZM348 0V350M1 223L348 350L548 335M348 350L200 557" stroke="#fff" fill="none" />
    </svg>
  );
}

function ViewCube() {
  return (
    <svg className="absolute top-[71px] right-[10px]" width="164" height="110" viewBox="105 75 492 330" role="img" aria-label="View cube">
      <defs>
        <linearGradient id="cubeFront" x1="0" y1="0" x2="0" y2="1">
          <stop offset="0" stopColor="#b5b6b7" />
          <stop offset="1" stopColor="#9c9d9e" />
        </linearGradient>
      </defs>
      <path d="M312 94L455 128L462 260L307 230z" fill="url(#cubeFront)" />
      <path d="M312 94L266 178L259 305L307 230z" fill="#a5a6a7" />
      <path
        d="M131 277a226 109 0 1 0 452 0a226 109 0 1 0-452 0zM182 284a175 82 0 1 0 350 0a175 82 0 1 0-350 0z"
        fill="#6b737c"
        fillOpacity="0.5"
        fillRule="evenodd"
      />
      <path d="M259 305L307 230L462 260L402 327z" fill="#979899" />
      <path d="M312 94L307 230L462 260M307 230L259 305L402 327M312 94L266 178" stroke="#3a3d40" strokeWidth="3" strokeDasharray="18 8" fill="none" />
      <g fontFamily="Liberation Sans, Arial, sans-serif" fontWeight="bold">
        <text transform="translate(349 182) rotate(8)" fontSize="34" fill="#44474b">LEFT</text>
        <text transform="translate(340 320) rotate(-50) skewX(-15)" fontSize="26" fill="#44474b">BOTTOM</text>
        <text transform="translate(276 236) rotate(-66) skewX(-20)" fontSize="26" fill="#44474b">TOP</text>
        <g fill="#c6c8ca" textAnchor="middle">
          <text transform="translate(436 208) rotate(10) skewX(-40)" fontSize="56">W</text>
          <text transform="translate(126 254) rotate(100) skewX(-10)" fontSize="56">N</text>
          <text transform="translate(518 324) rotate(80) skewX(-10)" fontSize="50">S</text>
          <text transform="translate(270 374) rotate(96) skewX(-20)" fontSize="46">E</text>
        </g>
      </g>
    </svg>
  );
}

function NavBar() {
  const stroke = '#42484e';
  const caret = <Icon w={6} h={4}><path d="M0 0h6L3 4z" fill={stroke} /></Icon>;
  return (
    <div className="absolute top-[263px] right-1 flex h-[259px] w-10 flex-col items-center rounded-[3px] bg-[#5b6165]">
      <button aria-label="Close navigation bar" className="mt-0.5 mr-0.5 self-end">
        <Icon w={10} h={10}><circle cx="5" cy="5" r="4" stroke={stroke} /><path d="M3 3l4 4M7 3L3 7" stroke={stroke} /></Icon>
      </button>
      <button aria-label="SteeringWheel" className="mt-2 flex flex-col items-center gap-2">
        <Icon w={30} h={30}>
          <path d="M15 1.500h13v14a13 13 0 1 1-13-14z" fill="#5f6770" stroke={stroke} strokeWidth="1.5" />
          <circle cx="15" cy="15" r="8" stroke={stroke} strokeWidth="1.5" />
          <path d="M9 21l-4 4M21 21l4 4" stroke={stroke} strokeWidth="1.5" />
        </Icon>
        {caret}
      </button>
      <span className="mt-1.5 h-px w-full bg-[#666c70]" />
      <button aria-label="Pan" className="mt-1">
        <Icon w={30} h={30}>
          <path d="M9 28L2 17c-2-4 2-4 4-2l2 2L5 6c0-3 3-3 4 0l2 7V3c0-3 4-3 4 0v10l3-9c1-3 4-2 3 1l-1 9 3-6c2-3 4-1 3 1l-5 14-2 6z" fill="#5f6770" stroke={stroke} strokeWidth="1.5" />
        </Icon>
      </button>
      <button aria-label="Zoom" className="mt-1 flex flex-col items-center gap-2">
        <Icon w={30} h={30}>
          <path d="M1 8V1h7M13 1h7v7M8 20H1v-7M1 1l18 18M20 1L1 20" stroke={stroke} strokeWidth="1.5" />
          <circle cx="20" cy="20" r="6" fill="#5f6770" stroke={stroke} strokeWidth="1.5" />
          <path d="M24 24l5 5" stroke={stroke} strokeWidth="3" />
        </Icon>
        {caret}
      </button>
      <button aria-label="Orbit" className="mt-1.5 flex flex-col items-center gap-2">
        <Icon w={30} h={30}>
          <ellipse cx="15" cy="16" rx="14" ry="5" stroke={stroke} strokeWidth="1.5" />
          <path d="M12 28V7H9l6-6 6 6h-4v21z" fill="#5f6770" stroke={stroke} strokeWidth="1.5" />
          <path d="M4 21l7-4v8z" fill={stroke} />
        </Icon>
        {caret}
      </button>
      <span className="mt-1.5 h-px w-full bg-[#666c70]" />
      <button aria-label="ShowMotion" className="mt-1">
        <Icon w={30} h={30}>
          <path d="M1 1h8v8H1zM11 1h8v8h-8zM21 1h8v8h-8zM1 12h20v17H1z" fill="#5f6770" stroke={stroke} strokeWidth="1.5" />
          <path d="M6 15l9 5-9 6z" fill={stroke} />
        </Icon>
      </button>
      <button aria-label="Navigation bar options" className="mt-auto mr-0.5 mb-0.5 self-end">
        <Icon w={10} h={10}><circle cx="5" cy="5" r="4" stroke={stroke} /><path d="M3 4h4L5 7z" fill={stroke} /></Icon>
      </button>
    </div>
  );
}

function UcsTriad() {
  return (
    <svg className="absolute bottom-0 left-0" width="75" height="145" viewBox="0 0 225 435" fill="none" aria-hidden="true">
      <path d="M140 67H187L142 111H188" stroke="#1f63d0" strokeWidth="3" />
      <path d="M148 130V278" stroke="#3f73c8" strokeWidth="21" strokeLinecap="round" />
      <path d="M146 130V278" stroke="#6ba0f2" strokeWidth="8" />
      <path d="M0 250L148 278" stroke="#2f7a33" strokeWidth="22" />
      <path d="M0 246L148 274" stroke="#4ea850" strokeWidth="10" />
      <path d="M0 190l6-6" stroke="#3f9a43" strokeWidth="3" />
      <path d="M72 315L117 360M110 318L74 358" stroke="#c03a3a" strokeWidth="3" />
      <path d="M144 292L86 370" stroke="#8f3d3f" strokeWidth="20" strokeLinecap="round" />
      <path d="M140 292L84 366" stroke="#b35557" strokeWidth="8" />
    </svg>
  );
}

function CommandLine() {
  return (
    <div className="absolute right-[33px] bottom-0 left-11 flex h-[69px] font-['DejaVu_Sans_Mono','Liberation_Mono',monospace]">
      <div className="flex w-[30px] shrink-0 flex-col items-center bg-[#2b313d]/80 pt-[5px] pr-[3px]">
        <Icon w={22} h={7}>
          <path d="M0 1h22M0 5.5h22" stroke="#cfd2d6" strokeWidth="2" strokeDasharray="2 2" />
        </Icon>
        <button aria-label="Close command line" className="mt-2">
          <Icon w={12} h={12}><path d="M1 1l10 10M11 1L1 11" stroke="#c9ccd0" strokeWidth="2" /></Icon>
        </button>
        <button aria-label="Customize command line" className="mt-[13px]">
          <Icon><path d="M2 18L12 8" stroke="#c9ccd0" strokeWidth="3" /><path d="M17 2l-4 4 2 2 4-3c0 5-4 7-8 5-2-5 2-9 6-8z" fill="#c9ccd0" /></Icon>
        </button>
      </div>
      <div className="min-w-0 flex-1">
        <div className="h-[43px] overflow-hidden rounded-tr-xs bg-[#98999b] pt-1 pl-[3px] text-[15px] leading-[19px] whitespace-nowrap text-[#111]">
          <p>Automatic save to C:\Users\bruna\AppData\Local\Temp\Aula4_ContSolidos_1_266_8a48e838.sv$ ...</p>
          <p>Command:</p>
        </div>
        <label className="mt-px flex h-6 items-center rounded-br-xs bg-[#bdbec0] pr-[7px] pl-[5px]">
          <Icon w={20} h={16}>
            <rect x=".5" y=".5" width="19" height="15" fill="#b0b1b3" stroke="#6a6b6d" />
            <path d="M0 0h20v4H0z" fill="#6a6b6d" />
            <path d="M2 6l4 3-4 3M6 12h5" stroke="#55565a" />
          </Icon>
          <svg width="10" height="6" viewBox="0 0 10 6" className="ml-0.5 shrink-0" aria-hidden="true"><path d="M0 0h10L5 6z" fill="#4a4b4e" /></svg>
          <input
            aria-label="Command"
            placeholder="Type a command"
            className="ml-2 min-w-0 flex-1 bg-transparent text-[15px] italic outline-none placeholder:text-[#66676a]"
          />
          <Icon w={9} h={6}><path d="M0 6h9L4.5 0z" fill="#4a4b4e" /></Icon>
        </label>
      </div>
    </div>
  );
}

function Viewport() {
  return (
    <div className="flex min-h-0 flex-1 pr-0.5">
      <main className="relative min-w-0 flex-1 overflow-hidden bg-[#222831]">
        <div className="flex justify-between px-0.5 pt-1.5">
          <div className="text-[15px] leading-5 text-[#e4e6e8]">
            <button>[−]</button>
            <button>[Custom View]</button>
            <button>[X-Ray]</button>
          </div>
          <div className="flex items-center gap-3 pr-[9px]">
            <button aria-label="Minimize viewport"><Icon w={13} h={13}><path d="M0 10.5h13" stroke="#eceef0" strokeWidth="3" /></Icon></button>
            <button aria-label="Restore viewport"><Icon w={13} h={13}><path d="M3 1h9v9" stroke="#eceef0" /><rect x="1.5" y="4.5" width="7" height="7" stroke="#eceef0" strokeWidth="3" /></Icon></button>
            <button aria-label="Close viewport"><Icon w={13} h={13}><path d="M2 2l9 9M11 2l-9 9" stroke="#eceef0" strokeWidth="3" /></Icon></button>
          </div>
        </div>
        <Octahedron />
        <ViewCube />
        <button className="absolute top-[212px] right-[49px] flex h-[21px] w-[82px] items-center justify-between rounded-[5px] border border-[#b4b8c4] bg-[#979ba8] px-1 text-[12px] text-[#4d525e]">
          Unnamed
          <Icon w={11} h={6}><path d="M1 .5h9L5.5 5z" stroke="#b9bdc9" /></Icon>
        </button>
        <NavBar />
        <UcsTriad />
        <CommandLine />
      </main>
      <div className="w-2 shrink-0 bg-[#d6e3f2]" />
    </div>
  );
}

/* ---------- bottom bar ---------- */

function StatusGroup({ children, width }: { children: React.ReactNode; width: string }) {
  return <div className={`flex h-[30px] shrink-0 items-center bg-[#3b4453] ${width}`}>{children}</div>;
}

interface StatusButtonProps {
  label: string;
  width: string;
  on?: boolean;
  children: React.ReactNode;
}

function StatusButton({ label, width, on = false, children }: StatusButtonProps) {
  return (
    <button aria-label={label} aria-pressed={on} className={`flex h-7 shrink-0 items-center justify-center ${width} ${on ? 'bg-[#5f8dc1]' : ''}`}>
      {children}
    </button>
  );
}

const Compass = () => <path d="M9 0l3 10 6 6v3l-6-3v3l-3-3-3 3v-3l-6 3v-3l6-6z" fill="#e4e6e8" />;

function StatusBar() {
  return (
    <div className="ml-auto flex text-[#e9ebed]">
      <StatusGroup width="mr-[3px] w-[59px] justify-center">
        <button>MODEL</button>
      </StatusGroup>
      <StatusGroup width="mr-[3px] w-[79px]">
        <StatusButton label="Grid" width="w-[30px]">
          <Icon><path d="M5.5 0v20M10.5 0v20M15.5 0v20M0 5.5h20M0 10.5h20M0 15.5h20" stroke={LIGHT} /></Icon>
        </StatusButton>
        <StatusButton label="Snap" width="w-[29px]">
          <Icon w={15} h={15}><path d="M0 1.5h15M0 7.5h15M0 13.5h15" stroke={LIGHT} strokeWidth="3" strokeDasharray="3 3" /></Icon>
        </StatusButton>
        <StatusButton label="Snap settings" width="w-5"><Caret big /></StatusButton>
      </StatusGroup>
      <StatusGroup width="mr-px w-[159px]">
        <StatusButton label="Dynamic input" width="w-[31px]">
          <Icon><path d="M5 0v10M0 5h10" stroke={LIGHT} /><rect x="7.5" y="11.5" width="12" height="5" fill={LIGHT} stroke="#fff" /><path d="M9 12v4" stroke="#59616f" /></Icon>
        </StatusButton>
        <StatusButton label="Ortho" width="w-7" on>
          <Icon><path d="M.5 0v19.5H20" stroke="#fff" /><path d="M1 13.500h5.500V19" stroke="#fff" /></Icon>
        </StatusButton>
        <StatusButton label="Polar" width="w-8">
          <Icon><circle cx="8.5" cy="10.500" r="8" stroke={LIGHT} /><path d="M8 10.500h12M8 10.500L17 1M13 6v9" stroke={LIGHT} /></Icon>
        </StatusButton>
        <StatusButton label="Polar settings" width="w-[18px]"><Caret big /></StatusButton>
        <StatusButton label="Isometric" width="w-[31px]">
          <Icon><path d="M2 1l16 16" stroke="#d0545c" /><path d="M10.500 0v18" stroke="#5fae74" /><rect x="9" y="8" width="3" height="3" stroke={LIGHT} /></Icon>
        </StatusButton>
        <StatusButton label="Isometric settings" width="w-[19px]"><Caret big /></StatusButton>
      </StatusGroup>
      <StatusGroup width="mr-[3px] w-[79px]">
        <StatusButton label="Object snap tracking" width="w-[31px]">
          <Icon><path d="M1 17L15 2" stroke={LIGHT} /><path d="M0 17.5h20" stroke="#9aa0a8" strokeWidth="2" /><circle cx="8" cy="10" r="2" fill="#fff" /></Icon>
        </StatusButton>
        <StatusButton label="Object snap" width="w-7" on>
          <Icon><path d="M7 2.5h12v16H3.5V7" stroke="#fff" /><rect x="1" y="0.5" width="5" height="5" stroke="#fff" /></Icon>
        </StatusButton>
        <StatusButton label="Object snap settings" width="w-5"><Caret big /></StatusButton>
      </StatusGroup>
      <StatusGroup width="mr-[3px] w-[131px]">
        <StatusButton label="Annotation visibility" width="w-7" on>
          <Icon><Compass /><circle cx="16" cy="4" r="3" stroke="#fff" fill="#5f8dc1" /></Icon>
        </StatusButton>
        <StatusButton label="AutoScale" width="w-[33px]">
          <Icon><Compass /><path d="M17 0l-4 5h3l-2 4 5-5h-3z" fill="#e4e6e8" /></Icon>
        </StatusButton>
        <StatusButton label="Annotation scale" width="w-[27px]">
          <Icon w={18}><Compass /></Icon>
        </StatusButton>
        <button className="flex w-[43px] items-center justify-center gap-1.5">1:1 <Caret big /></button>
      </StatusGroup>
      <StatusGroup width="mr-px w-[49px]">
        <StatusButton label="Workspace switching" width="w-[30px]"><GearIcon /></StatusButton>
        <StatusButton label="Workspace list" width="w-[19px]"><Caret big /></StatusButton>
      </StatusGroup>
      <StatusGroup width="mr-[3px] w-8">
        <StatusButton label="Annotation monitor" width="w-[29px]">
          <Icon><path d="M10 0v20M0 10h20" stroke="#e4e6e8" strokeWidth="3" /></Icon>
        </StatusButton>
      </StatusGroup>
      <StatusGroup width="mr-[3px] w-[29px]">
        <StatusButton label="Isolate objects" width="w-[29px]">
          <Icon><rect x=".5" y=".5" width="7" height="7" stroke={LIGHT} /><circle cx="15" cy="9" r="4" stroke={LIGHT} /><path d="M8 12.5l4.5 7h-9z" stroke={LIGHT} /></Icon>
        </StatusButton>
      </StatusGroup>
      <StatusGroup width="mr-[3px] w-[34px] justify-center">
        <StatusButton label="Graphics performance" width="w-7">
          <Icon w={26} h={26}>
            <circle cx="12" cy="11" r="10" fill="#2b62a8" />
            <path d="M5 1v15M0 6h16" stroke="#bfe0ff" strokeWidth="2" />
            <rect x="3" y="4" width="4" height="4" fill="#2b62a8" stroke="#fff" />
            <path d="M0 16h9v7H0z" fill="#f5b730" />
            <path d="M11 17l5 5 9-10" stroke="#3fa64c" strokeWidth="4" />
          </Icon>
        </StatusButton>
      </StatusGroup>
      <StatusGroup width="w-[30px] justify-center">
        <StatusButton label="Customization" width="w-[29px]">
          <Icon><path d="M0 2h20M0 10h20M0 18h20" stroke="#e4e6e8" strokeWidth="2" /></Icon>
        </StatusButton>
      </StatusGroup>
    </div>
  );
}

const layouts = ['Model', 'Layout1', 'Layout2'];

function BottomBar() {
  const [active, setActive] = useState('Model');
  return (
    <footer className="flex h-9 items-start border-t border-b border-t-[#3f4755] border-b-[#55585e] bg-[#222831] pt-px">
      <div className="flex pl-[10px]">
        {layouts.map((name) => (
          <button
            key={name}
            onClick={() => setActive(name)}
            className={`relative h-[22px] w-[79px] leading-[19px] ${active === name ? 'font-bold text-white' : 'text-[#b9bdc3]'}`}
          >
            <svg className="absolute inset-0 h-full w-full" viewBox="0 0 80 22" preserveAspectRatio="none" aria-hidden="true">
              <path d="M0 0c6 2 4 22 12 22h50c10 0 8-20 16-22z" fill={active === name ? '#3b4453' : '#2c3340'} />
            </svg>
            <span className="relative">{name}</span>
          </button>
        ))}
        <button aria-label="New layout" className="ml-[7px] flex h-5 w-7 items-center justify-center rounded-md bg-[#2c3340]">
          <Icon w={10} h={10}><path d="M5 0v10M0 5h10" stroke="#b4b8be" strokeWidth="2" /></Icon>
        </button>
      </div>
      <StatusBar />
    </footer>
  );
}

export default function App() {
  return (
    <div className="flex h-screen flex-col overflow-hidden bg-[#222831] font-['Open_Sans','Noto_Sans',sans-serif] text-sm">
      <Header />
      <Ribbon />
      <FileTabs />
      <Viewport />
      <BottomBar />
    </div>
  );
}
